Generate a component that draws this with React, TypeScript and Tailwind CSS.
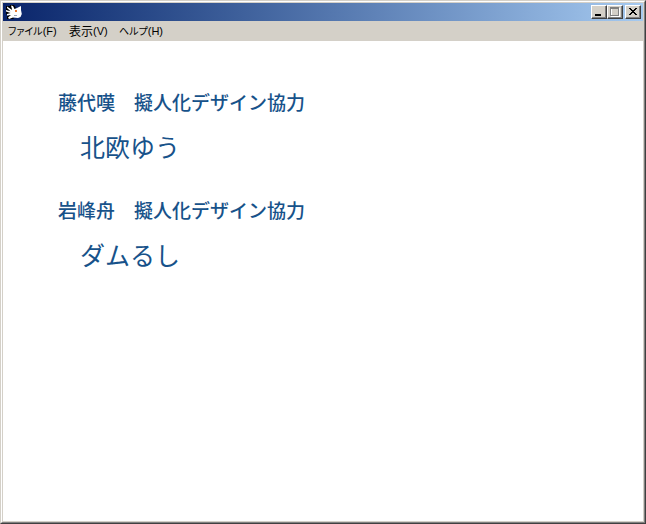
const menus = [
  { label: "ファイル", accessKey: "F", width: "w-[61px]", size: "text-[10px]" },
  { label: "表示", accessKey: "V", width: "w-[50px]", size: "text-[12px]" },
  { label: "ヘルプ", accessKey: "H", width: "w-[56px]", size: "text-[10px]" },
];

const credits = [
  { role: "藤代嘆　擬人化デザイン協力", name: "北欧ゆう" },
  { role: "岩峰舟　擬人化デザイン協力", name: "ダムるし" },
];

function AppIcon() {
  return (
    <svg className="h-4 w-4" viewBox="0 0 16 16" aria-hidden="true">
      <path d="M0 2h4V1h4l2 3-4 8 2 3H1v-3h2l-3-2z" />
      <path
        fill="#fff"
        d="M5 1.500 7 2l1.500 3L11 4l4-2v4l.8 4-1.300 3-2.500 1-5-.5L3 15l-1-1.500L5 11l-4 .5V10l3.500-1L0 7.500V6l4.500 1.200L1 4V2.500L6.200 6z"
      />
      <path fill="#e87830" d="M9 6h2v2H9z" />
      <path fill="#9aa3b8" d="M8 11h3v1H8z" />
    </svg>
  );
}

const captionButton =
  "flex h-[14px] w-4 items-center justify-center border border-t-white border-l-white border-r-[#404040] border-b-[#404040] bg-[#d4d0c8] shadow-[inset_-1px_-1px_0_#808080]";

function TitleBar() {
  return (
    <header className="flex h-[18px] items-center justify-between bg-linear-to-r from-[#0a246a] to-[#a6caf0] pr-[2px] pl-[3px]">
      <AppIcon />
      <div className="flex">
        <button type="button" aria-label="最小化" className={captionButton}>
          <svg className="h-3 w-[14px]" viewBox="0 0 14 12" shapeRendering="crispEdges">
            <path d="M3 8h6v2H3z" />
          </svg>
        </button>
        <button type="button" aria-label="最大化" disabled className={captionButton}>
          <svg className="h-3 w-[14px]" viewBox="0 0 14 12" shapeRendering="crispEdges" fill="none">
            <path stroke="#fff" d="M3.5 2.5h8v8h-8z" />
            <path stroke="#808080" d="M2.5 1.5h8v8h-8zM2 2.5h9" />
          </svg>
        </button>
        <button type="button" aria-label="閉じる" className={`${captionButton} ml-[2px]`}>
          <svg className="h-3 w-[14px]" viewBox="0 0 14 12" shapeRendering="crispEdges">
            <path d="M3 2h2v1h1v1h2V3h1V2h2v1h-1v1H9v1H8v1h1v1h1v1h1v1H9V8H8V7H6v1H5v1H3V8h1V7h1V6h1V5H5V4H4V3H3z" />
          </svg>
        </button>
      </div>
    </header>
  );
}

function MenuBar() {
  return (
    <nav className="flex h-5 items-center bg-[#d4d0c8] pl-[5px] leading-5 text-black [font-feature-settings:'palt']">
      {menus.map((menu) => (
        <button
          key={menu.accessKey}
          type="button"
          className={`flex items-center text-left whitespace-nowrap ${menu.width}`}
        >
          <span className={menu.size}>{menu.label}</span>
          <span className="font-['Liberation_Sans'] text-[11px]">({menu.accessKey})</span>
        </button>
      ))}
    </nav>
  );
}

export default function App() {
  return (
    <div className="min-h-screen border border-t-[#d4d0c8] border-r-[#404040] border-b-[#404040] border-l-[#d4d0c8] font-['Noto_Sans_CJK_JP',sans-serif]">
      <div className="flex min-h-[calc(100vh-2px)] flex-col border border-t-white border-r-[#808080] border-b-[#808080] border-l-white">
        <div className="flex grow flex-col border border-[#d4d0c8]">
          <TitleBar />
          <MenuBar />
          <main className="grow bg-white px-[55px] pt-[47px] text-[#17528a]">
            {credits.map((credit) => (
              <section key={credit.name} className="mb-[34px]">
                <p className="text-[19px] leading-7 font-medium">{credit.role}</p>
                <h2 className="mt-[14px] ml-[22px] text-[25px] leading-8">{credit.name}</h2>
              </section>
            ))}
          </main>
        </div>
      </div>
    </div>
  );
}
